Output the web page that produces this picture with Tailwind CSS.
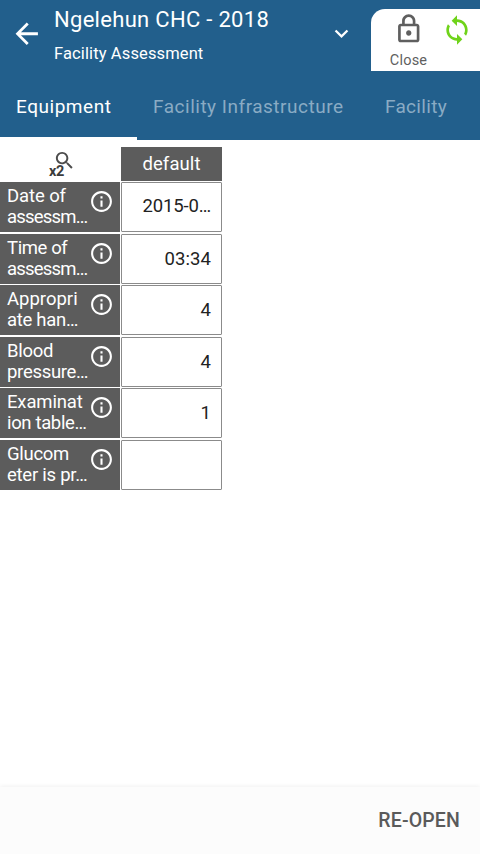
<!DOCTYPE html>
<html lang="en">
<head>
<meta charset="utf-8">
<title>Facility Assessment</title>
<script src="https://cdn.jsdelivr.net/npm/@tailwindcss/browser@4"></script>
</head>
<body class="w-[480px] h-[854px] overflow-hidden bg-white font-['Roboto',sans-serif] flex flex-col">
<svg class="hidden">
  <symbol id="info" viewBox="0 0 24 24"><path d="M11 7h2v2h-2zm0 4h2v6h-2zm1-9C6.480 2 2 6.480 2 12s4.480 10 10 10 10-4.480 10-10S17.520 2 12 2zm0 18c-4.410 0-8-3.590-8-8s3.590-8 8-8 8 3.590 8 8-3.590 8-8 8z"/></symbol>
</svg>
<header class="h-[73px] shrink-0 bg-[#225f8c] flex text-white">
  <div class="w-[54px] pl-[10px] pt-[17px]">
    <svg class="size-[33.500px]" viewBox="0 0 24 24" fill="currentColor"><path d="M20 11H7.830l5.590-5.590L12 4l-8 8 8 8 1.410-1.410L7.830 13H20v-2z"/></svg>
  </div>
  <div class="w-[274px] whitespace-nowrap">
    <h1 class="mt-[6px] text-[22px] leading-[28px] tracking-[0.300px]">Ngelehun CHC - 2018</h1>
    <p class="mt-[10px] text-[16.500px] leading-[20px] tracking-[0.120px]">Facility Assessment</p>
  </div>
  <svg class="size-[27px] mt-[20px]" viewBox="0 0 24 24" fill="currentColor"><path d="M16.590 8.590L12 13.170 7.410 8.590 6 10l6 6 6-6z"/></svg>
  <div class="ml-auto mt-[9px] w-[109px] h-[61.500px] bg-white rounded-tl-[14px] flex text-[#5f5f5f]">
    <div class="w-[75px] flex flex-col items-center pt-[3.500px]">
      <svg class="size-[33.500px]" viewBox="0 0 24 24" fill="currentColor"><path d="M18 8h-1V6c0-2.760-2.240-5-5-5S7 3.240 7 6v2H6c-1.100 0-2 .9-2 2v10c0 1.100.9 2 2 2h12c1.100 0 2-.9 2-2V10c0-1.100-.9-2-2-2zM9 6c0-1.660 1.340-3 3-3s3 1.340 3 3v2H9V6zm9 14H6V10h12v10zm-6-3c1.100 0 2-.9 2-2s-.9-2-2-2-2 .9-2 2 .9 2 2 2z"/></svg>
      <span class="text-[14.500px] leading-[20px] mt-[6px] tracking-[0.200px]">Close</span>
    </div>
    <svg class="size-[32px] mt-[4.500px] -ml-[5px] text-[#6fd31a]" viewBox="0 0 24 24" fill="currentColor"><path d="M12 4V1L8 5l4 4V6c3.310 0 6 2.690 6 6 0 1.010-.25 1.970-.7 2.800l1.460 1.460C19.540 15.030 20 13.570 20 12c0-4.420-3.580-8-8-8zm0 14c-3.310 0-6-2.690-6-6 0-1.010.25-1.970.7-2.800L5.240 7.740C4.460 8.970 4 10.430 4 12c0 4.420 3.580 8 8 8v3l4-4-4-4v3z"/></svg>
  </div>
</header>
<nav class="h-[67px] shrink-0 bg-[#225f8c] flex text-[19px] leading-[67px] whitespace-nowrap text-[#8aabc4]">
  <div class="w-[137px] border-b-[3px] border-white pl-[16px] text-white tracking-[0.530px]">Equipment</div>
  <div class="w-[232px] pl-[16px] tracking-[0.510px]">Facility Infrastructure</div>
  <div class="pl-[16px] tracking-[0.300px]">Facility</div>
</nav>
<main class="flex-1 pt-[7px] text-[18.500px]">
  <div class="flex h-[35px]">
    <div class="w-[121px] relative text-[#4c4c4c]">
      <svg class="absolute left-[52.500px] top-[2px] size-[23px]" viewBox="0 0 24 24" fill="currentColor"><path d="M15.500 14h-.79l-.28-.27C15.410 12.590 16 11.110 16 9.500 16 5.910 13.090 3 9.500 3S3 5.910 3 9.500 5.910 16 9.500 16c1.610 0 3.090-.59 4.230-1.570l.27.28v.79l5 4.990L20.490 19l-4.990-5zm-6 0C7.010 14 5 11.990 5 9.500S7.010 5 9.500 5 14 7.010 14 9.500 11.990 14 9.500 14z"/></svg>
      <span class="absolute left-[49px] top-[16px] text-[14.500px] leading-[17px] font-bold text-[#3c3c3c] tracking-[-0.300px]">x2</span>
    </div>
    <div class="w-[101px] h-[33.500px] bg-[#5c5c5c] text-white text-center leading-[34px] tracking-[0.100px]">default</div>
  </div>
  <div class="grid grid-cols-[119.500px_101px] gap-x-[1.500px] auto-rows-[51.600px] w-[222px]">
    <div class="h-[50px] bg-[#5c5c5c] text-white pl-[7px] flex"><p class="w-[81.500px] pt-[4px] leading-[21px] whitespace-nowrap"><span class="tracking-[-0.100px]">Date of</span><br><span class="tracking-[-0.800px]">assessm…</span></p><svg class="size-[25px] mt-[7px] shrink-0" fill="currentColor"><use href="#info"/></svg></div>
    <div class="h-[50px] border border-[#8b8b8b] rounded-[1px] text-right text-[#222] pr-[10px] leading-[47px] tracking-[-0.150px]">2015-0…</div>
    <div class="h-[50px] bg-[#5c5c5c] text-white pl-[7px] flex"><p class="w-[81.500px] pt-[4px] leading-[21px] whitespace-nowrap"><span class="tracking-[-0.400px]">Time of</span><br><span class="tracking-[-0.800px]">assessm…</span></p><svg class="size-[25px] mt-[7px] shrink-0" fill="currentColor"><use href="#info"/></svg></div>
    <div class="h-[50px] border border-[#8b8b8b] rounded-[1px] text-right text-[#222] pr-[10px] leading-[48px] tracking-[0.100px]">03:34</div>
    <div class="h-[50px] bg-[#5c5c5c] text-white pl-[7px] flex"><p class="w-[81.500px] pt-[4px] leading-[21px] whitespace-nowrap"><span class="tracking-[0]">Appropri</span><br><span class="tracking-[-0.300px]">ate han…</span></p><svg class="size-[25px] mt-[7px] shrink-0" fill="currentColor"><use href="#info"/></svg></div>
    <div class="h-[50px] border border-[#8b8b8b] rounded-[1px] text-right text-[#222] pr-[10px] leading-[49px] tracking-[0.200px]">4</div>
    <div class="h-[50px] bg-[#5c5c5c] text-white pl-[7px] flex"><p class="w-[81.500px] pt-[4px] leading-[21px] whitespace-nowrap"><span class="tracking-[-0.300px]">Blood</span><br><span class="tracking-[-0.300px]">pressure…</span></p><svg class="size-[25px] mt-[7px] shrink-0" fill="currentColor"><use href="#info"/></svg></div>
    <div class="h-[50px] border border-[#8b8b8b] rounded-[1px] text-right text-[#222] pr-[10px] leading-[48px] tracking-[0.200px]">4</div>
    <div class="h-[50px] bg-[#5c5c5c] text-white pl-[7px] flex"><p class="w-[81.500px] pt-[4px] leading-[21px] whitespace-nowrap"><span class="tracking-[-0.150px]">Examinat</span><br><span class="tracking-[-0.350px]">ion table…</span></p><svg class="size-[25px] mt-[7px] shrink-0" fill="currentColor"><use href="#info"/></svg></div>
    <div class="h-[50px] border border-[#8b8b8b] rounded-[1px] text-right text-[#222] pr-[10px] leading-[49px] tracking-[0.200px]">1</div>
    <div class="h-[50px] bg-[#5c5c5c] text-white pl-[7px] flex"><p class="w-[81.500px] pt-[4px] leading-[21px] whitespace-nowrap"><span class="tracking-[-0.300px]">Glucom</span><br><span class="tracking-[-0.250px]">eter is pr…</span></p><svg class="size-[25px] mt-[7px] shrink-0" fill="currentColor"><use href="#info"/></svg></div>
    <div class="h-[50px] border border-[#8b8b8b] rounded-[1px]"></div>
  </div>
</main>
<footer class="h-[67px] shrink-0 bg-[#fcfcfc] shadow-[0_-1px_4px_rgba(0,0,0,0.06)] flex items-center justify-end pr-[20px] text-[19.500px] font-medium text-[#5a5a5a] tracking-[0.150px]">RE-OPEN</footer>
</body>
</html>
